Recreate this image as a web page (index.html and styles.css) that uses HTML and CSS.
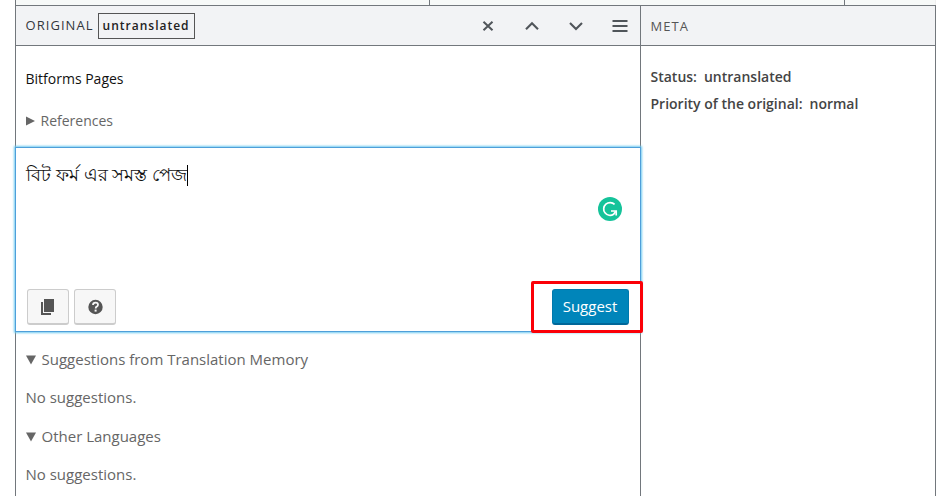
FILE: index.html
```html
<!DOCTYPE html>
<html lang="en">
<head>
<meta charset="utf-8">
<title>Translate</title>
<link rel="stylesheet" href="styles.css">
</head>
<body>
<div class="page">
  <div class="row-edge"><span></span><span></span><span></span></div>
  <div class="editor">
    <main class="left">
      <header class="head">
        <span class="title">ORIGINAL</span>
        <span class="badge">untranslated</span>
        <nav class="actions">
          <svg class="icon" viewBox="0 0 20 20"><path d="M5.5 5.7l9 8.6M14.5 5.7l-9 8.6" stroke-width="2"/></svg>
          <svg class="icon" viewBox="0 0 20 20"><path d="M4 13.3l6-6 6 6" stroke-width="2.1"/></svg>
          <svg class="icon" viewBox="0 0 20 20"><path d="M4 6.9l6 6 6-6" stroke-width="2.1"/></svg>
          <svg class="icon" viewBox="0 0 20 20"><path d="M2.5 5h15M2.5 10h15M2.5 15h15" stroke-width="2"/></svg>
        </nav>
      </header>
      <div class="source">
        <p class="original">Bitforms Pages</p>
        <p class="toggle"><svg class="tri" viewBox="0 0 9 10"><path d="M0 .4L9 5 0 9.6z"/></svg>References</p>
      </div>
      <section class="box">
        <div class="text" lang="bn"><span>বিট ফর্ম এর সমস্ত পেজ</span><i class="caret"></i></div>
        <svg class="grammar" viewBox="0 0 24 24"><circle cx="12" cy="12" r="12" fill="#15c39a"/><path d="M16.6 7.4A6.4 6.4 0 1 0 15.6 17.3L17.6 14.6" fill="none" stroke="#fff" stroke-width="1.7"/><path d="M13 14h5.2v4.6" fill="none" stroke="#fff" stroke-width="1.7"/></svg>
        <div class="tools">
          <button class="tool" aria-label="Copy"><svg viewBox="0 0 20 20"><path d="M6 2h10v13H6zM3 5h2v11h8v2H3z"/></svg></button>
          <button class="tool" aria-label="Help"><svg viewBox="0 0 20 20"><circle cx="10.5" cy="10" r="7.2"/><path d="M8 8q0-2.4 2.6-2.4 2.4 0 2.4 2.1 0 1.3-1.3 1.9-1 .5-1 1.8" fill="none" stroke="#f7f7f7" stroke-width="1.8"/><path d="M9.6 12.6h2v2h-2z" fill="#f7f7f7"/></svg></button>
          <button class="suggest">Suggest</button>
        </div>
        <div class="highlight"></div>
      </section>
      <section class="lists">
        <p class="toggle"><svg class="tri" viewBox="0 0 10 10"><path d="M0 .6h10L5 9.6z"/></svg>Suggestions from Translation Memory</p>
        <p>No suggestions.</p>
        <p class="toggle"><svg class="tri" viewBox="0 0 10 10"><path d="M0 .6h10L5 9.6z"/></svg>Other Languages</p>
        <p>No suggestions.</p>
      </section>
    </main>
    <aside class="meta">
      <header class="head meta-head">META</header>
      <dl><dt>Status:</dt><dd>untranslated</dd></dl>
      <dl><dt>Priority of the original:</dt><dd>normal</dd></dl>
    </aside>
  </div>
</div>
</body>
</html>
```
FILE: styles.css
```css
* { box-sizing: border-box; }
body { margin: 0; background: #fff; font: 15px/20px "Open Sans", sans-serif; color: #666; }
p, dl, dd { margin: 0; }
.page { width: 921px; height: 496px; margin-left: 15px; overflow: visible; }
.row-edge { display: grid; grid-template-columns: 414px 415px 92px; height: 5px; background: #f7f9f8; }
.row-edge span { border-right: 1px solid #72777c; }
.row-edge span:first-child { border-left: 1px solid #72777c; width: 415px; }
.row-edge span:nth-child(2) { width: 416px; }
.row-edge span:last-child { border-right: 1px solid #eee; }
.editor { display: flex; height: 491px; border: 1px solid #72777c; border-bottom: 0; }
.left { width: 624px; }
.head { display: flex; align-items: center; height: 40px; padding-left: 9.5px; background: #f2f3f5; border-bottom: 1px solid #72777c; font-size: 13px; letter-spacing: 1.05px; color: #32373c; }
.title { margin-top: -1px; }
.badge { margin-left: 4px; height: 26px; padding: 0 4px; border: 1px solid #555; font-size: 12px; font-weight: 600; line-height: 24px; letter-spacing: 1px; color: #222; }
.actions { display: flex; gap: 24px; margin-left: auto; padding-right: 10.5px; }
.icon { width: 20px; height: 20px; fill: none; stroke: #50555a; }
.source { height: 101px; padding: 23px 9.5px 0; }
.original { font-size: 14px; color: #111; margin-bottom: 22px; }
.toggle { display: flex; align-items: center; }
.tri { width: 10px; height: 10px; margin-right: 6px; fill: #666; }
.source .toggle { font-size: 14px; }
.source .tri { width: 9px; margin-right: 6px; }
.box { position: relative; width: 626px; height: 185px; margin-left: -1px; border: 1px solid #4f9fd9; box-shadow: 0 0 2px 1px #72cbf0; padding: 15px 10px 0; background: #fff; }
.text { display: flex; align-items: center; height: 24px; font-size: 18.35px; line-height: 22px; color: #111; }
.text span { margin-top: -3px; }
.caret { width: 1px; height: 21px; background: #000; }
.grammar { position: absolute; left: 582px; top: 49px; width: 24px; height: 24px; }
.tools { display: flex; align-items: flex-start; gap: 5px; margin: 102px 1px 0; }
.tool { display: flex; align-items: center; justify-content: center; width: 42px; height: 36px; padding: 0; border: 1px solid #ccc; border-bottom-width: 2px; border-radius: 3px; background: #f7f7f7; }
.tool svg { width: 20px; height: 20px; fill: #555; }
.suggest { width: 77px; height: 36px; margin-left: auto; padding: 0 1px 0 0; border: 1px solid #0079ad; border-bottom: 2px solid #006799; border-radius: 3px; background: #0085ba; color: #fff; font: 15px/31px "Open Sans", sans-serif; }
.highlight { position: absolute; left: 515px; top: 133px; width: 112px; height: 52px; border: 3px solid #fb0007; border-radius: 2px; }
.lists { display: grid; grid-template-rows: 38px 39px 38px 39px; padding: 17px 9.5px 0; }
.lists p { height: 20px; }
.lists .tri { position: relative; top: 1px; }
.meta { width: 295px; border-left: 1px solid #72777c; color: #444; font-size: 14px; font-weight: 600; line-height: 27px; }
.meta-head { margin-bottom: 17px; padding-top: 1px; font-weight: 400; color: #555; }
.meta dl { display: flex; gap: 7px; padding-left: 9.5px; }
.meta .meta-head { margin-bottom: 17px; }
```
